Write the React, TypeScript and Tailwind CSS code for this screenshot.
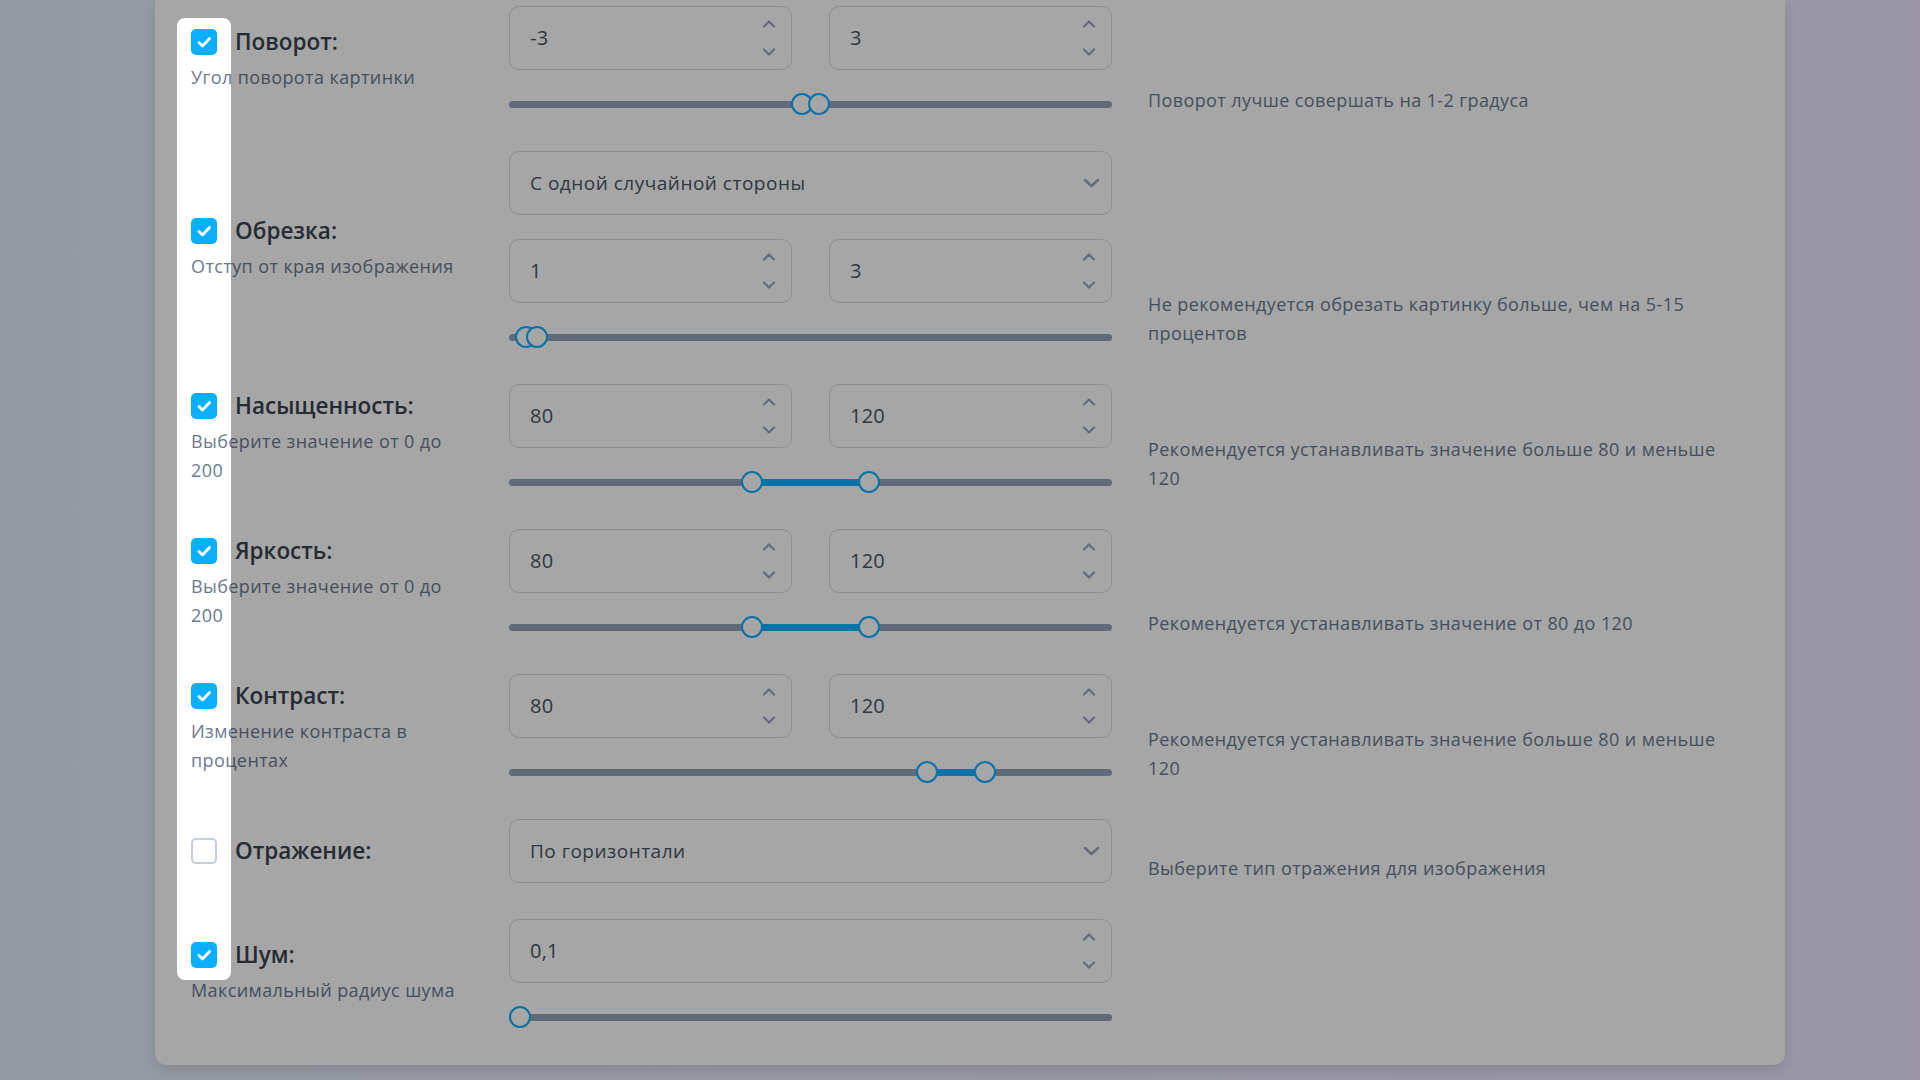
import React from 'react';

const FONT = { fontFamily: '"Open Sans", "DejaVu Sans", sans-serif' };

type Row = {
  title: string;
  hint: string;
  checked: boolean;
  select?: string;
  values?: string[];
  thumbs?: number[];
  note: string;
};

const ROWS: Row[] = [
  { title: 'Поворот:', hint: 'Угол поворота картинки', checked: true, values: ['-3', '3'], thumbs: [0.485, 0.515], note: 'Поворот лучше совершать на 1-2 градуса' },
  { title: 'Обрезка:', hint: 'Отступ от края изображения', checked: true, select: 'С одной случайной стороны', values: ['1', '3'], thumbs: [0.01, 0.03], note: 'Не рекомендуется обрезать картинку больше, чем на 5-15 процентов' },
  { title: 'Насыщенность:', hint: 'Выберите значение от 0 до 200', checked: true, values: ['80', '120'], thumbs: [0.4, 0.6], note: 'Рекомендуется устанавливать значение больше 80 и меньше 120' },
  { title: 'Яркость:', hint: 'Выберите значение от 0 до 200', checked: true, values: ['80', '120'], thumbs: [0.4, 0.6], note: 'Рекомендуется устанавливать значение от 80 до 120' },
  { title: 'Контраст:', hint: 'Изменение контраста в процентах', checked: true, values: ['80', '120'], thumbs: [0.7, 0.8], note: 'Рекомендуется устанавливать значение больше 80 и меньше 120' },
  { title: 'Отражение:', hint: '', checked: false, select: 'По горизонтали', note: 'Выберите тип отражения для изображения' },
  { title: 'Шум:', hint: 'Максимальный радиус шума', checked: true, values: ['0,1'], thumbs: [0], note: '' },
];

function Chevron({ up }: { up?: boolean }) {
  return (
    <svg width="14" height="9" viewBox="0 0 14 9" fill="none">
      <path
        d={up ? 'M2 7.5L7 2.5L12 7.5' : 'M2 1.5L7 6.5L12 1.5'}
        stroke="#9aa6ba"
        strokeWidth="2.2"
        strokeLinecap="round"
        strokeLinejoin="round"
      />
    </svg>
  );
}

function Checkbox({ checked }: { checked: boolean }) {
  if (!checked) {
    return <div className="h-[26px] w-[26px] shrink-0 rounded-[5px] border-2 border-[#c5cedb] bg-white" />;
  }
  return (
    <div className="flex h-[26px] w-[26px] shrink-0 items-center justify-center rounded-[5px] bg-[#0aafff]">
      <svg width="26" height="26" viewBox="0 0 26 26" fill="none">
        <path d="M8 13.5L11.5 17L18.5 9.5" stroke="white" strokeWidth="2.8" strokeLinecap="round" strokeLinejoin="round" />
      </svg>
    </div>
  );
}

function NumberBox({ value }: { value: string }) {
  return (
    <div className="flex h-16 flex-1 items-center justify-between rounded-[10px] border border-[#d3dbe6] bg-white pl-5 pr-[15px]">
      <span className="text-[20px] tracking-[0.2px] text-[#4b5563]">{value}</span>
      <div className="flex flex-col items-center gap-5">
        <Chevron up />
        <Chevron />
      </div>
    </div>
  );
}

function SelectBox({ value }: { value: string }) {
  return (
    <div className="flex h-16 items-center justify-between rounded-[10px] border border-[#d3dbe6] bg-white pl-5 pr-[11px]">
      <span className="text-[19px] tracking-[0.5px] text-[#4b5563]">{value}</span>
      <svg width="17" height="10" viewBox="0 0 17 10" fill="none">
        <path d="M2 2L8.5 8L15 2" stroke="#9aa6ba" strokeWidth="2.5" strokeLinecap="round" strokeLinejoin="round" />
      </svg>
    </div>
  );
}

function RangeSlider({ thumbs }: { thumbs: number[] }) {
  const lo = thumbs[0];
  const hi = thumbs.length > 1 ? thumbs[1] : thumbs[0];
  return (
    <div className="relative mt-[23px] h-[22px]">
      <div className="absolute left-0 right-0 top-[7.5px] h-[7px] rounded-full bg-[#94a3b8]" />
      {thumbs.length > 1 && (
        <div
          className="absolute top-[7.5px] h-[7px] bg-[#0aafff]"
          style={{ left: `calc(11px + ${lo} * (100% - 22px))`, width: `calc(${hi - lo} * (100% - 22px))` }}
        />
      )}
      {thumbs.map((t, i) => (
        <div
          key={i}
          className="absolute top-0 h-[22px] w-[22px] rounded-full border-2 border-[#0aafff] bg-white"
          style={{ left: `calc(${t} * (100% - 22px))` }}
        />
      ))}
    </div>
  );
}

function SettingRow({ row }: { row: Row }) {
  return (
    <div className="grid grid-cols-[282px_603px_1fr] gap-x-9">
      <div className="self-center">
        <div className="flex items-center gap-[18px]">
          <Checkbox checked={row.checked} />
          <span className="text-[22.5px] font-semibold leading-[26px] text-[#3b4250]">{row.title}</span>
        </div>
        {row.hint && <p className="mt-2 text-[18px] leading-[29px] tracking-[0.4px] text-[#6b7a90]">{row.hint}</p>}
      </div>

      <div className="flex flex-col">
        {row.select && <SelectBox value={row.select} />}
        {row.values && (
          <div className={`flex gap-[37px] ${row.select ? 'mt-6' : ''}`}>
            {row.values.map((v, i) => (
              <NumberBox key={i} value={v} />
            ))}
          </div>
        )}
        {row.thumbs && <RangeSlider thumbs={row.thumbs} />}
      </div>

      <div className="self-end">
        {row.note && <p className="w-[585px] text-[18px] leading-[29px] tracking-[0.4px] text-[#6b7a90]">{row.note}</p>}
      </div>
    </div>
  );
}

export default function App() {
  return (
    <div className="relative h-[1080px] overflow-hidden bg-gradient-to-r from-[#e4edfa] to-[#ede6ff]" style={FONT}>
      <div className="ml-[155px] w-[1630px] rounded-b-[12px] bg-white px-9 pb-[37px] pt-[6px] shadow-[0_4px_14px_rgba(0,0,0,0.12)]">
        <div className="flex flex-col gap-9">
          {ROWS.map((row) => (
            <SettingRow key={row.title} row={row} />
          ))}
        </div>
      </div>

      {/* tour spotlight over the checkbox column */}
      <div className="pointer-events-none absolute left-[177px] top-[18px] h-[962px] w-[54px] rounded-[8px] shadow-[0_0_0_9999px_rgba(0,0,0,0.35)]" />
    </div>
  );
}
